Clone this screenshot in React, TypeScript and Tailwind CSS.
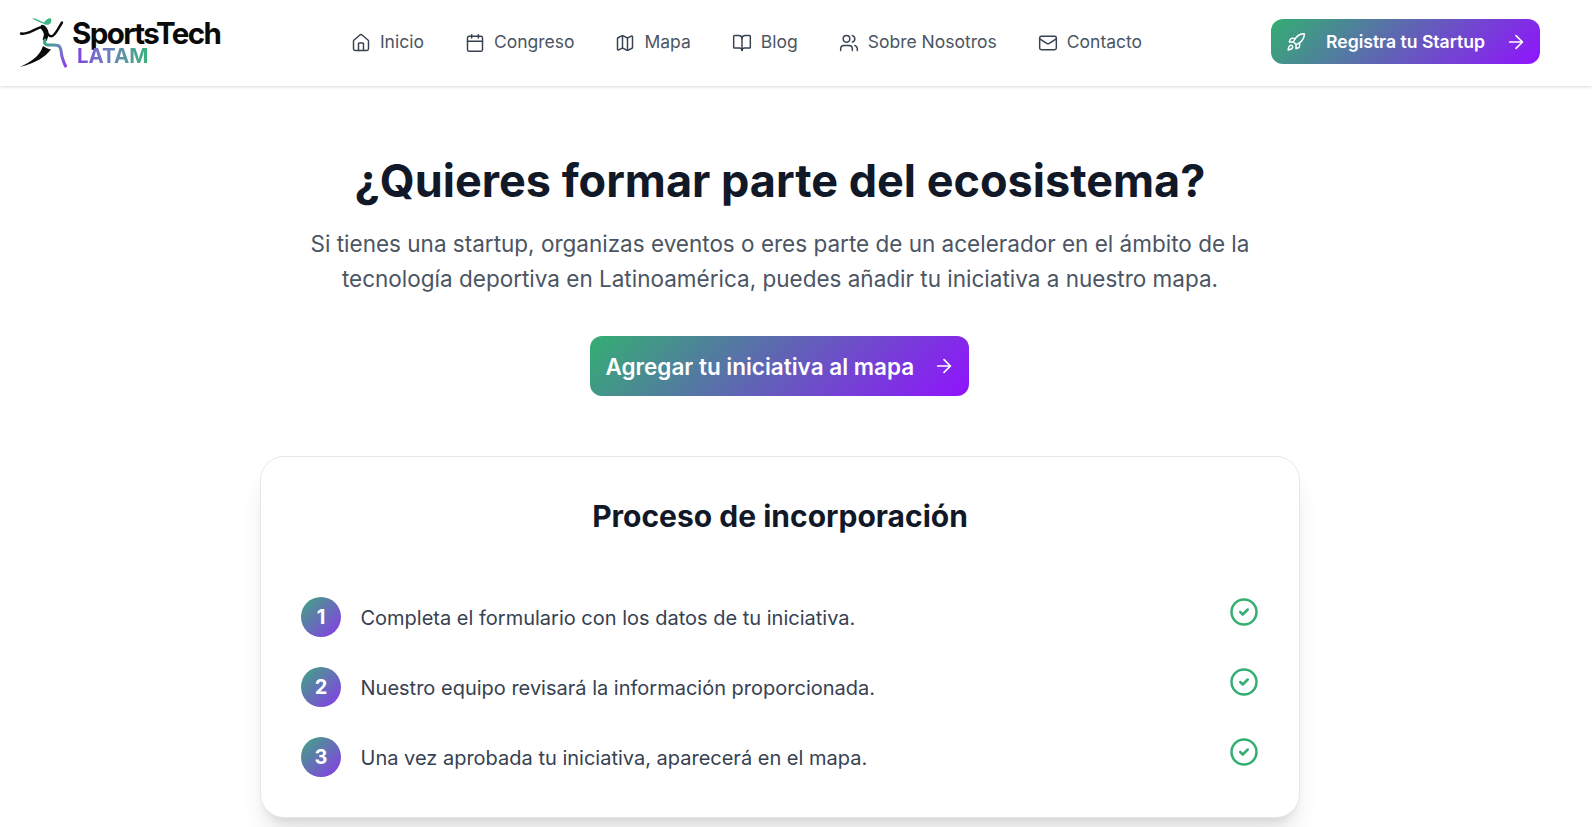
import { ArrowRight, BookOpen, Calendar, CircleCheck, House, Mail, Map, Rocket, Users } from 'lucide-react';

const links = [
  { label: 'Inicio', icon: House },
  { label: 'Congreso', icon: Calendar },
  { label: 'Mapa', icon: Map },
  { label: 'Blog', icon: BookOpen },
  { label: 'Sobre Nosotros', icon: Users },
  { label: 'Contacto', icon: Mail },
];

const steps = [
  'Completa el formulario con los datos de tu iniciativa.',
  'Nuestro equipo revisará la información proporcionada.',
  'Una vez aprobada tu iniciativa, aparecerá en el mapa.',
];

// Runner mark from the logo, coordinates are page pixels
function Runner() {
  return (
    <svg viewBox="19 14 48 53" className="w-12 h-[53px] shrink-0" fill="none" strokeLinecap="round" aria-hidden="true">
      <defs>
        <linearGradient id="leg" gradientUnits="userSpaceOnUse" x1="46" y1="42" x2="65" y2="65">
          <stop offset="0" stopColor="#36ab78" />
          <stop offset="0.35" stopColor="#6a86c0" />
          <stop offset="1" stopColor="#8b3fe8" />
        </linearGradient>
      </defs>
      {/* hair and cap */}
      <path d="M32 17c4 0 8 3 12 4.500 2-3 5-5 7-4 1 2 0 5-2 6-3 1-5-.5-7-1.500-3-1-7-2.500-10-5z" fill="#3fb583" />
      {/* arms and torso */}
      <path d="M21 32.500c3 .8 6-.5 9-1.500 4-1.500 8-4.500 12-5" stroke="#0a0a0a" strokeWidth="2.400" />
      <path d="M42 25c3 0 5 4 5.500 7 .8 2.500 3 4 5 3 3.500-2 6-8 9.500-13.500" stroke="#0a0a0a" strokeWidth="2.400" />
      <path d="M43 27c3 3 4 7 2 11" stroke="#0a0a0a" strokeWidth="4.500" />
      {/* hip and front leg */}
      <path d="M45 39c-1 3-.5 4.500 3 5 3.500.4 7-.5 10 .5 2.500 1 3 4 3.300 7 .4 4.500 2 9 4.200 13.500" stroke="url(#leg)" strokeWidth="3" />
      {/* back leg */}
      <path d="M43 45c3 2 5 3 8 3.500-3 4-7 7-11.500 10-6 3.500-12 5.500-19.500 7.500 6-3 11.500-6 15.500-9.500 3.500-3 6-7 7.500-11.500z" fill="#0a0a0a" />
    </svg>
  );
}

export default function App() {
  return (
    <div className="min-h-screen bg-white font-['Inter',sans-serif] overflow-hidden">
      <header className="h-[86px] bg-white shadow-[0_1px_3px_rgba(0,0,0,0.15)] pr-8 pb-[3px]">
        <div className="h-full pl-[19px] pr-5 flex items-center justify-between">
          <div className="flex items-center w-[203px]">
            <Runner />
            <div className="flex flex-col ml-[5px] mt-[5px]">
              <span className="text-[29.5px] leading-[22px] font-bold tracking-[-1.6px] text-[#0a0a0a]">SportsTech</span>
              <span className="text-[20.5px] leading-[23px] font-bold ml-[5px] w-fit bg-gradient-to-r from-[#8042e0] to-[#34b27b] bg-clip-text text-transparent">LATAM</span>
            </div>
          </div>
          <nav className="flex items-center gap-[41px] mt-[2px]">
            {links.map(({ label, icon: Icon }) => (
              <a key={label} className="flex items-center gap-2 text-[#4b5563] text-[17.5px]" href="#">
                <Icon className="w-5 h-5 mr-[1px] text-[#374151]" strokeWidth={1.75} />
                {label}
              </a>
            ))}
          </nav>
          <button className="w-[269px] h-[45px] rounded-xl pl-[15px] pr-[13px] flex items-center justify-between text-white text-[17.6px] font-semibold bg-[linear-gradient(135deg,#34ae72,#9013fe)]">
            <Rocket className="w-5 h-5" strokeWidth={1.75} />
            <span className="pt-[2px]">Registra tu Startup</span>
            <ArrowRight className="w-[22px] h-[22px]" strokeWidth={1.75} />
          </button>
        </div>
      </header>

      <main className="pr-8 flex flex-col items-center">
        <h1 className="mt-[67px] text-[45px] leading-[56px] font-bold text-[#111827]">¿Quieres formar parte del ecosistema?</h1>
        <p className="mt-[17px] w-[960px] text-center text-[22.5px] leading-[35px] text-[#4b5563]">
          Si tienes una startup, organizas eventos o eres parte de un acelerador en el ámbito de la tecnología deportiva en Latinoamérica, puedes añadir tu iniciativa a nuestro mapa.
        </p>
        <button className="mt-10 mr-[2px] h-[60px] w-[379px] pl-4 pr-[14px] rounded-xl flex items-center justify-between text-white text-[22.5px] font-semibold bg-[linear-gradient(135deg,#34ae72,#9013fe)]">
          <span className="pt-[1px]">Agregar tu iniciativa al mapa</span>
          <ArrowRight className="w-[22px] h-[22px]" strokeWidth={1.75} />
        </button>

        <section className="mt-[60px] w-[1040px] rounded-3xl border border-[#e5e7eb] bg-white shadow-xl px-10 pt-[41px] pb-[40px]">
          <h2 className="text-[30px] leading-9 font-bold text-center text-[#111827]">Proceso de incorporación</h2>
          <ul className="mt-[63px] flex flex-col gap-[30px]">
            {steps.map((step, i) => (
              <li key={step} className="flex items-start justify-between">
                <div className="flex items-center gap-[19.5px]">
                  <span className="w-10 h-10 rounded-full flex items-center justify-center text-white text-xl font-bold bg-[linear-gradient(135deg,#3fa880,#8a38ec)]">{i + 1}</span>
                  <span className="pt-[2px] text-xl text-[#374151]">{step}</span>
                </div>
                <CircleCheck className="w-[30px] h-[30px] text-[#34ae72]" strokeWidth={2} />
              </li>
            ))}
          </ul>
        </section>
      </main>
    </div>
  );
}
